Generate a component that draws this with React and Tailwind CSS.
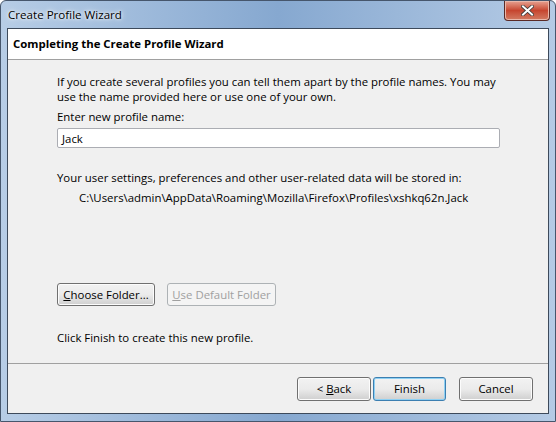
import React from "react";

const font = { fontFamily: '"Segoe UI", "Open Sans", "Noto Sans", sans-serif' };

const WinButton = ({ children, disabled, def, className = "" }) => (
  <div
    className={`flex items-center justify-center rounded-[3px] border text-[11.4px] ${
      disabled
        ? "border-[#adb2b5] bg-[#f4f4f4] text-[#a0a0a0]"
        : def
        ? "border-[#3c7fb1] bg-gradient-to-b from-[#f2f2f2] via-[#ebebeb] to-[#cfcfcf] text-black shadow-[inset_0_0_0_1px_#8ed0f3]"
        : "border-[#707070] bg-gradient-to-b from-[#f2f2f2] via-[#ebebeb] to-[#cfcfcf] text-black shadow-[inset_0_0_0_1px_#fcfcfc]"
    } ${className}`}
  >
    {children}
  </div>
);

export default function App() {
  return (
    <div
      className="relative flex h-[422px] w-[556px] flex-col rounded-t-[6px] border border-[#46566c] bg-gradient-to-r from-[#b7cde6] via-[#86a8d0] to-[#b5cbe5] px-[6px] pb-[7px]"
      style={font}
    >
      {/* title bar */}
      <div className="flex h-[27px] items-center pl-[1px] text-[11.6px] text-black">
        <span className="[text-shadow:0_0_6px_#ffffff,0_0_3px_#ffffff]">Create Profile Wizard</span>
      </div>
      <div className="absolute right-[5px] top-0 flex h-[20px] w-[46px] items-center justify-center rounded-b-[4px] border border-t-0 border-[#5a2a26] bg-gradient-to-b from-[#e6a191] via-[#c6452f] to-[#d27a62] shadow-[inset_0_0_0_1px_#e9b7aa]">
        <svg width="13" height="11" viewBox="0 0 13 11">
          <path d="M2 1.5 L11 9.5 M11 1.5 L2 9.5" stroke="#3a3a3a" strokeWidth="3.6" strokeLinecap="square" />
          <path d="M2 1.5 L11 9.5 M11 1.5 L2 9.5" stroke="#ffffff" strokeWidth="2" strokeLinecap="square" />
        </svg>
      </div>

      {/* client */}
      <div className="flex flex-1 flex-col border border-[#3d4a5b] bg-[#f0f0f0]">
        <div className="flex h-[31px] items-center border-b border-[#a0a0a0] bg-white pl-[5px] text-[11.4px] font-bold text-black">
          Completing the Create Profile Wizard
        </div>

        <div className="flex flex-1 flex-col pl-[49px] pr-[48px] text-[11.4px] leading-[15px] text-black">
          <p className="mt-[14px]">
            If you create several profiles you can tell them apart by the profile names. You may use the name provided here or use one of your own.
          </p>
          <p className="mt-[5px]">Enter new profile name:</p>
          <div className="mt-[4px] flex h-[20px] items-center rounded-[2px] border border-[#abadb3] bg-white pl-[4px]">
            Jack
          </div>
          <p className="mt-[22px]">Your user settings, preferences and other user-related data will be stored in:</p>
          <p className="mt-[5px] pl-[22px]">C:\Users\admin\AppData\Roaming\Mozilla\Firefox\Profiles\xshkq62n.Jack</p>

          <div className="mt-[78px] flex gap-[12px]">
            <WinButton className="h-[23px] w-[98px]">
              <span><span className="underline">C</span>hoose Folder...</span>
            </WinButton>
            <WinButton disabled className="h-[23px] w-[109px]">
              <span><span className="underline">U</span>se Default Folder</span>
            </WinButton>
          </div>
          <p className="mt-[24px]">Click Finish to create this new profile.</p>
        </div>

        <div className="flex h-[50px] items-center justify-end border-t border-[#a0a0a0] pr-[15px]">
          <WinButton className="h-[24px] w-[74px]">
            <span>&lt; <span className="underline">B</span>ack</span>
          </WinButton>
          <WinButton def className="ml-[2px] h-[24px] w-[73px]">
            Finish
          </WinButton>
          <WinButton className="ml-[13px] h-[24px] w-[74px]">Cancel</WinButton>
        </div>
      </div>
    </div>
  );
}
